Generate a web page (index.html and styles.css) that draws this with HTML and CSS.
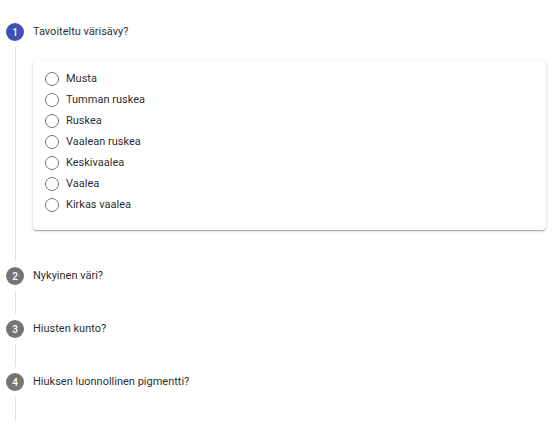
FILE: index.html
```html
<!DOCTYPE html>
<html lang="fi">
<head>
<meta charset="utf-8">
<title>Stepper</title>
<link rel="stylesheet" href="styles.css">
</head>
<body>
<div class="stepper">
  <div class="step">
    <div class="label">
      <span class="icon active">1</span>
      <span class="title">Tavoiteltu värisävy?</span>
    </div>
    <div class="content">
      <div class="card">
        <label class="option"><span class="radio"></span><span>Musta</span></label>
        <label class="option"><span class="radio"></span><span>Tumman ruskea</span></label>
        <label class="option"><span class="radio"></span><span>Ruskea</span></label>
        <label class="option"><span class="radio"></span><span>Vaalean ruskea</span></label>
        <label class="option"><span class="radio"></span><span>Keskivaalea</span></label>
        <label class="option"><span class="radio"></span><span>Vaalea</span></label>
        <label class="option"><span class="radio"></span><span>Kirkas vaalea</span></label>
      </div>
    </div>
  </div>
  <div class="connector"></div>
  <div class="step">
    <div class="label">
      <span class="icon">2</span>
      <span class="title">Nykyinen väri?</span>
    </div>
  </div>
  <div class="connector"></div>
  <div class="step">
    <div class="label">
      <span class="icon">3</span>
      <span class="title">Hiusten kunto?</span>
    </div>
  </div>
  <div class="connector"></div>
  <div class="step">
    <div class="label">
      <span class="icon">4</span>
      <span class="title">Hiuksen luonnollinen pigmentti?</span>
    </div>
  </div>
  <div class="connector"></div>
</div>
</body>
</html>
```

FILE: styles.css
```css
html, body {
  margin: 0;
  padding: 0;
  background: #ffffff;
}
body {
  font-family: Roboto, "Liberation Sans", sans-serif;
  font-size: 11px;
  color: rgba(0, 0, 0, 0.87);
  overflow: hidden;
}
.stepper {
  padding: 17px 9px 0 6px;
}
.label {
  display: flex;
  align-items: center;
  gap: 9px;
  padding: 6px 0;
  height: 18px;
}
.icon {
  width: 18px;
  height: 18px;
  border-radius: 50%;
  background: #757575;
  color: #ffffff;
  font-size: 10px;
  font-weight: 500;
  display: flex;
  align-items: center;
  justify-content: center;
  flex: none;
}
.icon.active {
  background: #3f51b5;
}
.title {
  line-height: 18px;
}
.content {
  margin-left: 9px;
  border-left: 1px solid #e0e0e0;
  padding: 13px 0 8px 17px;
}
.card {
  background: #fff;
  border-radius: 4px;
  box-shadow: 0 1px 3px rgba(0,0,0,0.2), 0 1px 1px rgba(0,0,0,0.14), 0 2px 1px -1px rgba(0,0,0,0.12);
  padding: 8px 12px 15px;
  display: flex;
  flex-direction: column;
}
.option {
  display: flex;
  align-items: center;
  gap: 7px;
  height: 21px;
}
.radio {
  width: 12px;
  height: 12px;
  border: 1.5px solid #757575;
  border-radius: 50%;
  flex: none;
}
.connector {
  margin-left: 9px;
  border-left: 1px solid #e0e0e0;
  height: 23px;
}
```
